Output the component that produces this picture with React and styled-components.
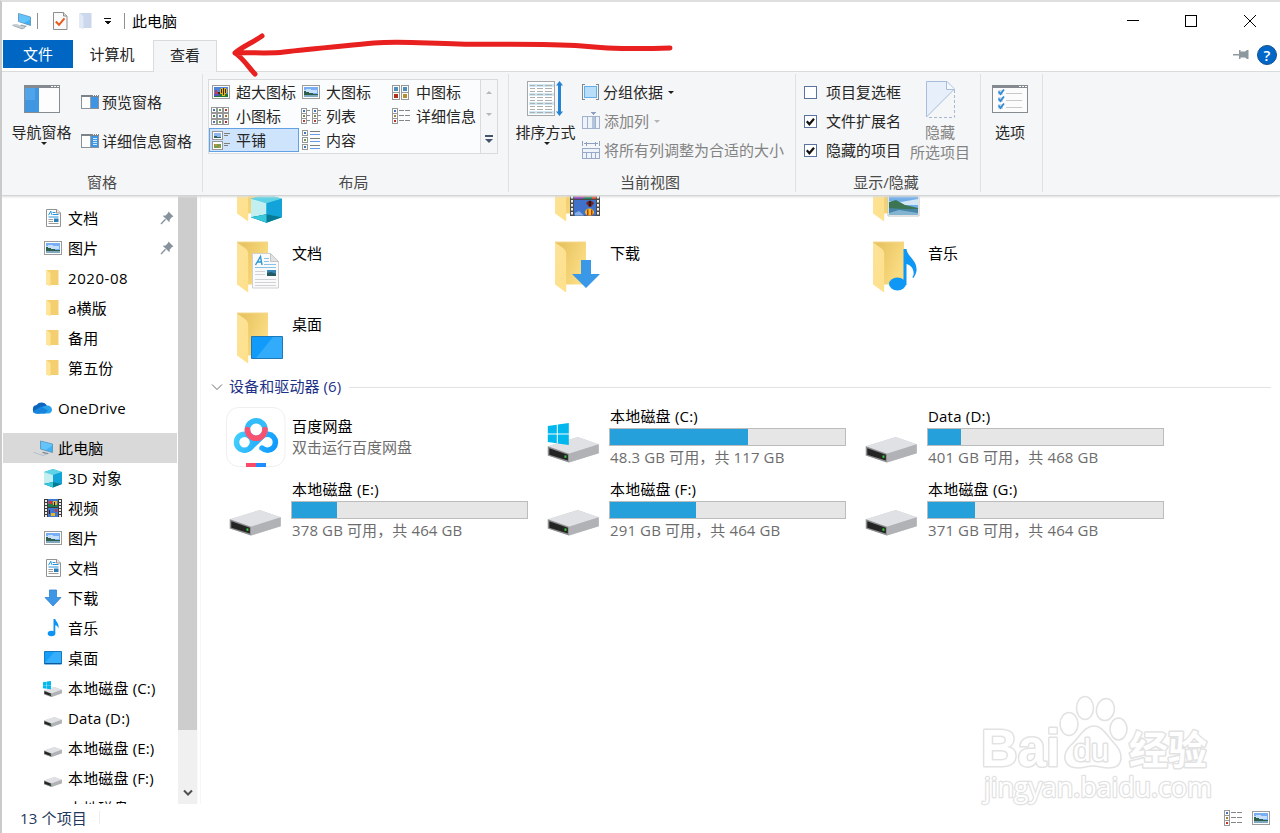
import React from 'react';
import styled, { createGlobalStyle } from 'styled-components';

const GlobalStyle = createGlobalStyle`
  * {
    box-sizing: border-box;
  }
  body {
    margin: 0;
    background: #fff;
    font-family: "Open Sans", "Noto Sans CJK SC", sans-serif;
    font-size: 15px;
    line-height: 20px;
    color: #000;
  }
  svg {
    display: block;
    flex: none;
  }
`;

/* ---------- window frame ---------- */

const Window = styled.div`
  position: relative;
  width: 1280px;
  height: 833px;
  display: flex;
  flex-direction: column;
  overflow: hidden;
  background: #fff;
  border-top: 2px solid #dfdfdf;
  border-left: 2px solid #cacaca;
  white-space: nowrap;
`;

const TitleBar = styled.div`
  display: flex;
  align-items: center;
  height: 38px;
  padding-left: 10px;
`;

const TitleDivider = styled.div`
  width: 1px;
  height: 16px;
  margin-left: ${(props) => props.$left}px;
  margin-right: ${(props) => props.$right}px;
  background: #8f8f8f;
`;

const Gap = styled.div`
  width: ${(props) => props.$w}px;
`;

const WindowTitle = styled.div`
  flex: 1;
`;

const WindowButtons = styled.div`
  display: flex;
  gap: 44px;
  padding-right: 23px;
`;

const TabBar = styled.div`
  display: flex;
  height: 32px;
  padding-left: 1px;
  border-bottom: 1px solid #dadbdc;
`;

const Tab = styled.div`
  display: flex;
  align-items: center;
  justify-content: center;
  width: ${(props) => props.$width}px;
  height: ${(props) => (props.$active ? 32 : 28)}px;
  padding-bottom: ${(props) => (props.$active ? 3 : 0)}px;
  padding-right: ${(props) => (props.$file || props.$active ? 0 : 2)}px;
  color: ${(props) => (props.$file ? '#fff' : '#262626')};
  background: ${(props) => (props.$file ? '#0066c4' : props.$active ? '#f5f6f7' : 'transparent')};
  border: ${(props) => (props.$active ? '1px solid #dadbdc' : 'none')};
  border-bottom: none;
`;

const TabTools = styled.div`
  display: flex;
  align-items: center;
  gap: 8px;
  margin-left: auto;
  padding-right: 3px;
  padding-bottom: 2px;
`;

const HelpBadge = styled.div`
  width: 20px;
  height: 20px;
  border-radius: 50%;
  background: #0067c8;
  border: 1px solid #17528c;
  color: #fff;
  font-size: 15px;
  font-weight: 600;
  line-height: 18px;
  text-align: center;
`;

/* ---------- ribbon ---------- */

const Ribbon = styled.div`
  position: relative;
  z-index: 1;
  display: flex;
  height: 124px;
  padding-top: 2px;
  background: #f5f6f7;
  border-bottom: 1px solid #d2d4d6;
  box-shadow: 0 1px 2px #dcdcdc;
  color: #262626;
`;

const Group = styled.div`
  display: flex;
  flex-direction: column;
  width: ${(props) => props.$width}px;
  height: 118px;
  border-right: 1px solid #dfe1e3;
`;

const GroupBody = styled.div`
  display: flex;
  height: 99px;
`;

const GroupLabel = styled.div`
  padding-right: ${(props) => props.$shift || 0}px;
  text-align: center;
  line-height: 20px;
  color: #4a4a4a;
`;

const BigButton = styled.div`
  display: flex;
  flex-direction: column;
  align-items: center;
  width: ${(props) => props.$width}px;
  padding-top: ${(props) => props.$top}px;
  color: ${(props) => (props.$disabled ? '#838383' : 'inherit')};
`;

const BigIcon = styled.div`
  height: ${(props) => props.$height}px;
`;

const ButtonColumn = styled.div`
  display: flex;
  flex-direction: column;
  gap: ${(props) => props.$gap}px;
  padding: ${(props) => props.$pad};
`;

const SmallButton = styled.div`
  display: flex;
  align-items: center;
  gap: ${(props) => props.$gap || 4}px;
  height: 20px;
  color: ${(props) => (props.$disabled ? '#838383' : 'inherit')};
`;

const Gallery = styled.div`
  display: flex;
  width: 290px;
  height: 75px;
  margin: 5px 0 0 5px;
  background: #fbfcfd;
  border: 1px solid #dadbdc;
`;

const GalleryGrid = styled.div`
  display: grid;
  grid-template-columns: 90px 90px 91px;
  grid-auto-rows: 24px;
  width: 271px;
`;

const GalleryItem = styled.div`
  display: flex;
  align-items: center;
  gap: 6px;
  padding-left: ${(props) => (props.$selected ? 1 : 2)}px;
  background: ${(props) => (props.$selected ? '#cde4fc' : 'transparent')};
  border: ${(props) => (props.$selected ? '1px solid #62a2e4' : 'none')};
`;

const GalleryIcon = styled.div`
  display: flex;
  justify-content: center;
  width: 19px;
`;

const GalleryScroll = styled.div`
  display: flex;
  flex-direction: column;
  justify-content: space-around;
  align-items: center;
  width: 17px;
  padding-top: 1px;
  background: #f5f6f7;
  border-left: 1px solid #dadbdc;
`;

const Triangle = styled.div`
  width: 0;
  height: 0;
  margin-left: ${(props) => props.$left || 0}px;
  border-left: ${(props) => props.$size || 4}px solid transparent;
  border-right: ${(props) => props.$size || 4}px solid transparent;
  border-${(props) => (props.$up ? 'bottom' : 'top')}: ${(props) => props.$size || 4}px solid
    ${(props) => props.$color || '#1e1e1e'};
`;

const MoreMark = styled.div`
  padding-top: 2px;
  border-top: 2px solid #44546a;
`;

const CheckBox = styled.div`
  display: flex;
  align-items: center;
  justify-content: center;
  width: 13px;
  height: 13px;
  background: #fff;
  border: 1px solid #5a72a0;
`;

/* ---------- content ---------- */

const Body = styled.div`
  display: flex;
  height: 608px;
`;

const Sidebar = styled.div`
  width: 175px;
  height: 608px;
  padding-top: 7px;
  overflow: hidden;
`;

const NavRow = styled.div`
  display: flex;
  align-items: center;
  height: 30px;
  margin-top: ${(props) => (props.$root ? 10 : 0)}px;
  margin-left: 1px;
  padding-left: ${(props) => (props.$root ? 30 : 40)}px;
  background: ${(props) => (props.$selected ? '#d9d9d9' : 'transparent')};
`;

const NavIcon = styled.div`
  display: flex;
  justify-content: center;
  width: 20px;
  margin-right: 5px;
`;

const NavLabel = styled.div`
  flex: 1;
  letter-spacing: ${(props) => props.$track || 0.15}px;
`;

const PinSlot = styled.div`
  padding-right: 3px;
`;

const ScrollBar = styled.div`
  display: flex;
  flex-direction: column;
  width: 20px;
  margin-left: 1px;
  background: #f0f0f0;
  border-right: 1px solid #fafafa;
`;

const ScrollThumb = styled.div`
  height: 534px;
  background: #cdcdcd;
`;

const ScrollArrow = styled.div`
  display: flex;
  justify-content: center;
  margin-top: 59px;
`;

const Main = styled.div`
  flex: 1;
  height: 608px;
  margin-left: 2px;
  padding-left: 10px;
  overflow: hidden;
  border-left: 1px solid #f6f6f6;
`;

const FolderGrid = styled.div`
  display: grid;
  grid-template-columns: repeat(3, 318px);
  grid-auto-rows: 71px;
  margin-top: -36px;
  padding-left: 18px;
`;

const FolderTile = styled.div`
  display: flex;
  gap: 6px;
  padding-top: 10px;
  padding-left: 8px;
`;

const FolderName = styled.div`
  padding-top: 2px;
`;

const SectionHeader = styled.div`
  display: flex;
  align-items: center;
  height: 24px;
  margin-top: 2px;
  color: #1e3287;
`;

const SectionTitle = styled.div`
  margin: -2px 8px 0 6px;
  letter-spacing: 0.1px;
`;

const SectionLine = styled.div`
  flex: 1;
  height: 1px;
  margin-right: 9px;
  background: #e2e2e2;
`;

const DeviceGrid = styled.div`
  display: grid;
  grid-template-columns: repeat(3, 318px);
  grid-auto-rows: 73px;
  padding: 8px 0 0 15px;
`;

const DeviceTile = styled.div`
  display: flex;
`;

const DeviceIcon = styled.div`
  width: 66px;
`;

const DeviceInfo = styled.div`
  width: 236px;
  padding-top: ${(props) => props.$top || 0}px;
`;

const DeviceName = styled.div`
  height: ${(props) => props.$height || 21}px;
  line-height: 18px;
  letter-spacing: 0.2px;
`;

const DeviceDetail = styled.div`
  padding-top: 1px;
  color: #6d6d6d;
  letter-spacing: ${(props) => props.$track || 0}px;
`;

const UsageBar = styled.div`
  height: 18px;
  margin-left: -1px;
  background: #e6e6e6;
  border: 1px solid #bcbcbc;
`;

const UsageFill = styled.div`
  height: 16px;
  background: #26a0da;
`;

const StatusBar = styled.div`
  display: flex;
  align-items: center;
  height: 29px;
  padding-left: 18px;
  padding-bottom: 2px;
  color: #1e395b;
`;

const StatusText = styled.div`
  letter-spacing: 0.15px;
`;

const StatusViews = styled.div`
  display: flex;
  align-items: center;
  gap: 10px;
  margin-left: auto;
  padding-right: 10px;
`;

const StatusDivider = styled.div`
  width: 1px;
  height: 13px;
  margin-left: 12px;
  background: #ececec;
`;

const Overlay = styled.svg`
  position: absolute;
  z-index: 2;
  left: ${(props) => props.$x}px;
  top: ${(props) => props.$y}px;
`;

/* ---------- small icons ---------- */

const PictureIcon = ({ flower }) => (
  <svg width="18" height="14" viewBox="0 0 18 14" shapeRendering="crispEdges">
    <rect x="0.5" y="0.5" width="17" height="13" fill="#fff" stroke="#9b9b9b" />
    <rect x="2" y="2" width="14" height="10" fill={flower ? '#4b86dc' : '#78aef4'} />
    {flower ? (
      <g>
        <path d="M2 9h14v3H2z" fill="#1f7a3a" />
        <path d="M3 5h2v2h2v2H3z" fill="#c93a55" />
        <path d="M2 9h5v2H2z" fill="#5a4fc8" />
        <path d="M9 3h5v1h1v4h-1v1h-1v2h-3V9H8V4h1z" fill="#e8b818" />
        <path d="M11 3h1v7h-1zM9 4h1v4H9zM13 4h1v4h-1zM6 7h2v2H6z" fill="#3a2a15" />
      </g>
    ) : (
      <g>
        <path d="M4 4h5v1h6v3H2V5h2z" fill="#c6e0fb" />
        <path d="M2 6h2v1h3v1h4v1h5v3H2z" fill="#7fa9c0" />
        <path d="M2 6h2v1h3v1h4v1h5v1H2z" fill="#2f5f4a" />
      </g>
    )}
  </svg>
);

const MiniBox = ({ x, y, color, size = 5 }) => (
  <g>
    <rect x={x + 0.5} y={y + 0.5} width={size} height={size} fill="#fff" stroke="#989898" />
    <rect x={x + 2} y={y + 2} width={size - 3} height={size - 3} fill={color} />
  </g>
);

const MediumIcon = () => (
  <svg width="17" height="15" viewBox="0 0 17 15" shapeRendering="crispEdges">
    <MiniBox x={0} y={0} size={7} color="#4c8fbe" />
    <MiniBox x={9} y={0} size={7} color="#4c8fbe" />
    <MiniBox x={0} y={7} size={7} color="#b0301c" />
    <MiniBox x={9} y={7} size={7} color="#b88c2c" />
  </svg>
);

const SmallGridIcon = () => (
  <svg width="19" height="19" viewBox="0 0 19 19" shapeRendering="crispEdges">
    {[0, 1, 2].map((row) =>
      [0, 1, 2].map((col) => (
        <MiniBox
          key={row * 3 + col}
          x={col * 6}
          y={row * 6}
          color={['#3f79b8', '#5e9c55', '#b9402c', '#4b8a58', '#4c84c8', '#a8761e', '#3f79b8', '#67994c', '#b52b22'][row * 3 + col]}
        />
      ))
    )}
  </svg>
);

const ListIcon = () => (
  <svg width="20" height="17" viewBox="0 0 20 17" shapeRendering="crispEdges">
    {[0, 11].map((x) => (
      <g key={x}>
        <MiniBox x={x} y={0} color="#3f79b8" />
        <MiniBox x={x} y={5} color="#76884c" />
        <MiniBox x={x} y={10} color="#b9402c" />
        <path d={`M${x + 6} 2.5h3M${x + 6} 7.5h3M${x + 6} 12.5h3`} stroke="#8a8a8a" />
      </g>
    ))}
  </svg>
);

const DetailsIcon = () => (
  <svg width="18" height="16" viewBox="0 0 18 16" shapeRendering="crispEdges">
    <MiniBox x={0} y={0} color="#3f79b8" />
    <MiniBox x={0} y={5} color="#9a8440" />
    <MiniBox x={0} y={10} color="#c8301c" />
    <path d="M7 2.5h5M13 2.5h5M7 7.5h5M13 7.5h5M7 12.5h5M13 12.5h5" stroke="#868686" />
  </svg>
);

const TilesIcon = () => (
  <svg width="18" height="19" viewBox="0 0 18 19" shapeRendering="crispEdges">
    <rect x="0.5" y="0.5" width="10" height="8" fill="#fff" stroke="#989898" />
    <path d="M2 2h7v5H2z" fill="#8bb7ee" />
    <path d="M2 5h3v1h4v1H2z" fill="#345f62" />
    <rect x="0.5" y="10.5" width="10" height="8" fill="#fff" stroke="#989898" />
    <path d="M2 13h7v4H2z" fill="#6fa052" />
    <path d="M3 13h2v2H3zM7 15h1v2H7z" fill="#d88a3a" />
    <path d="M12 2.5h6M12 4.5h4M12 12.5h6M12 14.5h4" stroke="#7e7e7e" />
  </svg>
);

const ContentIcon = () => (
  <svg width="18" height="20" viewBox="0 0 18 20" shapeRendering="crispEdges">
    <MiniBox x={0} y={0} color="#3f79b8" />
    <MiniBox x={0} y={7} color="#76984c" />
    <MiniBox x={0} y={14} color="#3f79b8" />
    <path d="M8 1.5h10M8 8.5h10M8 15.5h10" stroke="#7e7e7e" />
    <path d="M8 4.5h10M8 11.5h10M8 18.5h10" stroke="#6c9ce8" />
  </svg>
);

const PaneIcon = ({ lines }) => (
  <svg width="18" height="14" viewBox="0 0 18 14" shapeRendering="crispEdges">
    <rect x="0.5" y="0.5" width="17" height="13" fill="#fdfdfd" stroke="#8b9199" />
    <path d="M0 0h18v2H0z" fill="#7c8289" />
    <path d="M9 2h1v11H9z" fill="#9aa0a8" />
    <path d="M10 2h7v11h-7z" fill="#3d95e4" />
    <path d="M12 0h1v1h-1zM14 0h1v1h-1zM16 0h1v1h-1z" fill="#fff" />
    {lines && <path d="M12 4.5h4M12 6.5h4M12 8.5h4M12 10.5h4" stroke="#d5eafc" />}
  </svg>
);

const NavPaneIcon = () => (
  <svg width="36" height="28" viewBox="0 0 36 28" shapeRendering="crispEdges">
    <rect x="0.5" y="0.5" width="35" height="27" fill="#fdfdfd" stroke="#868b90" />
    <path d="M0 0h36v3H0z" fill="#848a8f" />
    <path d="M1 3h14v24H1z" fill="#3f97e2" />
    <path d="M1 3h10v12H1z" fill="#4fa4ea" />
    <path d="M27 1h2v1h-2zM30 1h2v1h-2zM33 1h2v1h-2z" fill="#fff" />
  </svg>
);

const SortIcon = () => (
  <svg width="37" height="36" viewBox="0 0 37 36">
    <rect x="0.5" y="0.5" width="27" height="34" fill="#fff" stroke="#a7a7a7" shapeRendering="crispEdges" />
    <path d="M2 3h25v3H2zM2 12h25v3H2zM2 21h25v3H2zM2 30h25v3H2z" fill="#cfe8f3" />
    {[4, 7, 10, 13, 16, 19, 22, 25, 28, 31].map((y) => (
      <path key={y} d={`M3 ${y + 0.5}h5M10 ${y + 0.5}h6M18 ${y + 0.5}h7`} stroke="#aeaeae" shapeRendering="crispEdges" />
    ))}
    <path d="M32.5 2v31" stroke="#2583d3" strokeWidth="3" />
    <path d="M29 4.5L32.5 0 36 4.5zM29 30.5l3.5 4.5 3.5-4.5z" fill="#2583d3" />
  </svg>
);

const GroupByIcon = () => (
  <svg width="17" height="16" viewBox="0 0 17 16" shapeRendering="crispEdges">
    <path d="M3 0.5H0.5v15H3M14 0.5h2.5v15H14" fill="none" stroke="#7b8896" />
    <rect x="2.5" y="2.5" width="12" height="11" fill="#b9def9" stroke="#66aee6" />
  </svg>
);

const AddColumnIcon = () => (
  <svg width="18" height="18" viewBox="0 0 18 18" shapeRendering="crispEdges">
    <path d="M0.5 4.5h17v12H0.5zM5.5 4v12M13.5 4v12" fill="#eef3fa" stroke="#a3b2cc" />
    <path d="M10 5h3v11h-3z" fill="#b4c4dc" />
    <path d="M9 0h5v1h-1v1h-1v1h-1V2h-1V1H9z" fill="#8e9fc0" />
  </svg>
);

const FitColumnsIcon = () => (
  <svg width="18" height="18" viewBox="0 0 18 18" shapeRendering="crispEdges">
    <path d="M0.5 0v5M17.5 0v5M2 2.5h14M4.5 0.5v4M13.5 0.5v4" stroke="#8e9fc0" />
    <path d="M0.5 7.5h17v10H0.5zM0 11.5h18M4.5 12v5M9.5 12v5M13.5 12v5" fill="#eef3fa" stroke="#97a9c7" />
  </svg>
);

const HideIcon = () => (
  <svg width="29" height="37" viewBox="0 0 29 37">
    <path d="M0.5 36V0.5H21L28.5 8z" fill="#e7effa" stroke="#a9bddb" />
    <path d="M20.5 1v7.5h8" fill="#f5f9fe" stroke="#a9bddb" />
    <path d="M28.5 9v27.5H1" fill="none" stroke="#a9b8d0" strokeDasharray="3 2" />
  </svg>
);

const OptionsIcon = () => (
  <svg width="36" height="28" viewBox="0 0 36 28">
    <g shapeRendering="crispEdges">
      <rect x="0.5" y="0.5" width="35" height="27" fill="#fcfcfc" stroke="#868b90" />
      <path d="M0 0h36v3H0z" fill="#848a8f" />
      <path d="M27 1h2v1h-2zM30 1h2v1h-2zM33 1h2v1h-2z" fill="#fff" />
      <path d="M14 8.5h16M14 15.5h16M14 22.5h16" stroke="#c9c9c9" />
      <path d="M6 5h5v5H6zM6 12h5v5H6zM6 19h5v5H6z" fill="#d6dce2" />
    </g>
    <path d="M6.5 6.5l2 2.5 3.5-4.5M6.5 13.5l2 2.5 3.5-4.5M6.5 20.5l2 2.5 3.5-4.5" fill="none" stroke="#2d8ddb" strokeWidth="1.8" />
  </svg>
);

const CheckMark = () => (
  <svg width="11" height="11" viewBox="0 0 11 11">
    <path d="M1.8 5.2l2.6 3L9 2.8" fill="none" stroke="#111" strokeWidth="2.2" />
  </svg>
);

const ComputerIcon = () => (
  <svg width="20" height="17" viewBox="0 0 20 17">
    <path d="M6.5 0.5L18.5 4v8.5L6.5 8.5z" fill="#3fb1f5" stroke="#5b8fb3" strokeWidth="0.8" />
    <path d="M7 1l11 3.3v2.2L12 10 7 8.2z" fill="#62c4fb" />
    <path d="M9 11.5l6 1.5-1.5 1.2L8 12.8z" fill="#98a5af" />
    <path d="M0.5 11.8L4 10.8l9 3.2-3 1.5z" fill="#c6cdd4" />
    <path d="M0.5 12.3l9.5 3.5 3-1.3" fill="none" stroke="#9aa6b0" />
  </svg>
);

const ComputerNavIcon = () => (
  <svg width="20" height="17" viewBox="0 0 20 17">
    <path d="M7.5 1L19.5 4v8.500L7.500 9z" fill="#3fb1f5" stroke="#5b8fb3" strokeWidth="0.8" />
    <path d="M8 1.500l11 2.800v1.500L13 10 8 8.700z" fill="#62c4fb" />
    <path d="M10 11.800l6 1.500-1.500 1L9 13z" fill="#7f8d98" />
    <path d="M0.500 12.300l9.500 3.200 4-1.500" fill="none" stroke="#b4bfcb" />
  </svg>
);

const PageCheckIcon = () => (
  <svg width="15" height="18" viewBox="0 0 15 18">
    <path d="M0.5 0.5h10l3.5 3.5v13.5H0.5z" fill="#fafafa" stroke="#8e8e8e" />
    <path d="M10.5 0.5v3.500H14" fill="#ddd" stroke="#8e8e8e" />
    <path d="M2.8 9.5l3.2 3.3 5.5-6.5" fill="none" stroke="#ea5a1c" strokeWidth="2" />
  </svg>
);

const FolderSmall = ({ ghost }) => (
  <svg width="14" height="18" viewBox="0 0 14 18">
    <path d="M0.5 1h12v15h-12z" fill={ghost ? '#cbd8eb' : '#f3cf70'} />
    <path d="M0.5 1l4 3v13.500l-4-2z" fill={ghost ? '#e0e9f5' : '#ffe596'} />
  </svg>
);

const DocSmall = () => (
  <svg width="15" height="18" viewBox="0 0 15 18">
    <path d="M0.5 0.5h10.500l3.500 3.500v13.500H0.500z" fill="#fff" stroke="#939393" />
    <path d="M10.500 0.500V4h4" fill="#eee" stroke="#939393" />
    <path d="M2.500 6.200l2.300-4 .8 3.500M6.500 3.500h3M6.500 5.500h6M2.500 8h10" fill="none" stroke="#2495dc" />
    <path d="M2.500 10.500h4.500M2.500 12.500h4.500M2.500 14.500h10" stroke="#9b9b9b" />
    <path d="M8 9.500h4.500v3.500H8z" fill="#2a7fb8" />
  </svg>
);

const CubeShape = () => (
  <g>
    <path d="M9 0l9 3v12l-9 3.500L0 15V3z" fill="#27bcd6" />
    <path d="M9 0l9 3-9 3-9-3z" fill="#5fd2e6" />
    <path d="M0 3l9 3v7L0 15z" fill="#c4eff0" />
    <path d="M18 3L9 6v7l9 2z" fill="#12a3da" />
    <path d="M0 15l9-2 9 2-9 3.500z" fill="#067a94" />
    <path d="M0 15l9-2v5.500z" fill="#38c8dc" />
  </g>
);

const CubeIcon = () => (
  <svg width="18" height="19" viewBox="0 0 18 19">
    <CubeShape />
  </svg>
);

const FilmShape = () => (
  <g shapeRendering="crispEdges">
    <path d="M0 0h18v18H0z" fill="#3b3b3b" />
    <path d="M4 0h10v8H4z" fill="#3f78d0" />
    <path d="M4 9h10v9H4z" fill="#3f78d0" />
    <path d="M4 5h10v3H4z" fill="#1b7f4e" />
    <path d="M5 2h3v3H5zM11 10h2v3h-2z" fill="#d7352c" />
    <path d="M9 2h4v4H9zM7 14h4v3H7z" fill="#edb51c" />
    <path d="M10 3h1v4h-1zM5 11h1v4H5z" fill="#42122a" />
    {[0, 3, 6, 9, 12, 15].map((y) => (
      <path key={y} d={`M1 ${y + 1}h2v2H1zM15 ${y + 1}h2v2h-2z`} fill="#eee" />
    ))}
  </g>
);

const FilmIcon = () => (
  <svg width="18" height="18" viewBox="0 0 18 18">
    <FilmShape />
  </svg>
);

/* bottom frames of the large film strip */
const FilmLarge = () => (
  <g>
    <path d="M15 16h30v30H15z" fill="#4a4a4a" />
    <path d="M19 16h22v13H19z" fill="#15805a" />
    <path d="M19 30h22v15.500H19z" fill="#3f72c8" />
    <path d="M21 23l5-3 4 8H21z" fill="#cf3158" />
    <path d="M19 27h9v2h-9z" fill="#7b3ab8" />
    <path d="M31 23h4v4h-4zM37 26h4v3h-4z" fill="#d9452c" />
    <path d="M31 33q4-5 8 0l-3 4h-2z" fill="#7d1d20" />
    <path d="M34 31h2v5h-2z" fill="#1c1c1c" />
    <path d="M30 43q0-4.500 4.500-4.500T39 43l-2 2.500h-5z" fill="#ecc318" />
    <path d="M32 39.500h1.500v6H32zM36 39.500h1.500v6H36z" fill="#c9332a" />
    <path d="M20 43l4-2 5 4.500h-9z" fill="#86aee8" />
    {[18, 22, 26, 30, 34, 38, 42].map((y) => (
      <path key={y} d={`M16 ${y}h2v2.500h-2zM42 ${y}h2v2.500h-2z`} fill="#efefef" />
    ))}
  </g>
);

const DownIcon = () => (
  <svg width="18" height="18" viewBox="0 0 18 18">
    <path d="M5.500 1h7v7.500H17L9 17 1 8.500h4.500z" fill="#3d97e6" stroke="#2f82cd" strokeWidth="0.8" />
  </svg>
);

const NoteIcon = () => (
  <svg width="13" height="18" viewBox="0 0 13 18">
    <ellipse cx="4.500" cy="14.500" rx="3.800" ry="2.800" fill="#0d94f2" />
    <path d="M6.500 0h1.800c.5 3 4 4 3.200 9.500-.6-2-1.700-3-3.200-3.300v8.300H6.500z" fill="#0d94f2" />
  </svg>
);

const DesktopIcon = () => (
  <svg width="18" height="14" viewBox="0 0 18 14">
    <path d="M0.500 0.500h17v12.500H0.500z" fill="#159ffa" stroke="#1679c0" />
    <path d="M1 12L10 1h7v11z" fill="#35aefb" />
    <path d="M1 12.500h16" stroke="#0b5b99" />
  </svg>
);

const CloudIcon = () => (
  <svg width="22" height="14" viewBox="0 0 22 14">
    <path d="M4.500 12.500a4.300 4.300 0 0 1 0-8.500A6.500 6.500 0 0 1 15 4.500l-7 8z" fill="#0d64bd" />
    <path d="M15 4.600c2.500-.3 5 1.500 5 4.200 0 2-1.500 3.700-3.800 3.700H4.500L9 6z" fill="#28a2ea" />
    <path d="M0.800 10.500L9 5.600l7 4-3 2.900H4.500c-1.600 0-3-.6-3.700-2z" fill="#1684dc" />
  </svg>
);

const DriveShape = () => (
  <g>
    <path d="M0 9.500L30.500 0 52 7.500v9L22 26 0 19z" fill="#cfd0d3" />
    <path d="M0 9.500L30.500 0 52 7.500 21.500 17z" fill="#e0e1e5" />
    <path d="M21.500 17L52 7.500v9L21.500 26z" fill="#b1b2b5" />
    <path d="M0 9.500L21.500 17v9L0 19z" fill="#8c8d8f" />
    <path d="M1.500 11.500l19 6.500v6L1.500 18z" fill="#242424" />
    <path d="M17 18.800h2v2.400h-2z" fill="#35d13b" />
  </g>
);

const WindowsMark = ({ x, y, scale }) => (
  <g transform={`translate(${x} ${y}) scale(${scale})`}>
    <path d="M0 3l9-1.300v8.800H0zM10 1.500L21 0v10.500H10zM0 11.500h9v8.800L0 19zM10 11.500h11V22l-11-1.500z" fill="#00b7ee" />
  </g>
);

const DriveSmall = ({ system }) => (
  <svg width="20" height="18" viewBox="0 0 20 18">
    <g transform="translate(1 8) scale(0.345 0.38)">
      <DriveShape />
    </g>
    {system && <WindowsMark x={0} y={2} scale={0.38} />}
  </svg>
);

const PinIcon = () => (
  <svg width="14" height="14" viewBox="0 0 14 14">
    <path d="M8.500 0.500l5 5-1.500.6L9.800 8.500l-.4 2.700L2.700 4.800l2.900-.4L8 2z" fill="#87929c" />
    <path d="M5.500 8.200L1 13" stroke="#87929c" strokeWidth="1.3" />
  </svg>
);

const RibbonPin = () => (
  <svg width="16" height="9" viewBox="0 0 16 9">
    <path d="M0 4h7v1.500H0z" fill="#8e989f" />
    <path d="M6 0h1.500v1.500h4.500L14 0h1.500v9H14l-2-1.500H7.500V9H6z" fill="#8e989f" />
  </svg>
);

/* ---------- large icons ---------- */

const overlays = {
  cube: (
    <g transform="translate(14 24) scale(1.72 1.55)">
      <CubeShape />
    </g>
  ),
  film: <FilmLarge />,
  picture: (
    <g>
      <path d="M15 25h31v21H15z" fill="#fff" stroke="#c4c4c4" />
      <path d="M16 26h29v19H16z" fill="#72afea" />
      <path d="M16 31l12 1 17-3v6H16z" fill="#d4e7f7" />
      <path d="M16 32l7-2 9 5 13 3v2H16z" fill="#3b7553" />
      <path d="M16 38l14 1h15v6H16z" fill="#4884a5" />
      <path d="M16 43l10-3 19 3v2H16z" fill="#82b4d2" />
    </g>
  ),
  doc: (
    <g>
      <path d="M15.500 12.500h18l8 8v26.500h-26z" fill="#fafafa" stroke="#d0d0d0" />
      <path d="M33.500 12.500v8h8z" fill="#e3e3e3" stroke="#c4c4c4" />
      <path d="M18.500 24l5-8.500 1.500 8.500M20 21h5" fill="none" stroke="#2b96d2" strokeWidth="1.4" />
      <path d="M27 17.500h5M27 20.500h5M27 23.500h12M18 26.500h21" stroke="#87c3e5" />
      <path d="M18 30.500h10M18 33.500h10M18 38.500h21M18 41.500h21M18 44.500h21" stroke="#cfd3d6" />
      <path d="M30 29h9v6h-9z" fill="#3585b6" />
      <path d="M30 32l4-1 5 2v2h-9z" fill="#245a60" />
    </g>
  ),
  down: <path d="M26 19h10v14h9L31 47 17 33h9z" fill="#3a98e8" />,
  note: (
    <g transform="translate(-0.5 0)">
      <ellipse cx="25" cy="43" rx="8.500" ry="6.500" fill="#0f97f5" />
      <path d="M31 8h3c1 8 11 11 10 22-.5 3-2 5-3 7-1.500-.5-1-1 0-3 1-6-3-10-7-11v21h-3z" fill="#0f97f5" />
    </g>
  ),
  desktop: (
    <g>
      <path d="M14.500 24.500h31v22h-31z" fill="#109afa" stroke="#1d79b8" />
      <path d="M19 46l17-21h9v21z" fill="#33abfb" />
    </g>
  ),
};

const FolderIcon = ({ kind }) => (
  <svg width="49" height="54" viewBox="0 0 49 54">
    <defs>
      <linearGradient id="folderBack" x1="0" y1="0" x2="1" y2="0.5">
        <stop offset="0.2" stopColor="#e8c462" />
        <stop offset="1" stopColor="#fbdd83" />
      </linearGradient>
      <linearGradient id="folderFront" x1="0" y1="0" x2="1" y2="1">
        <stop offset="0" stopColor="#fce39a" />
        <stop offset="1" stopColor="#ffe08a" />
      </linearGradient>
    </defs>
    <path d="M0 1h31v42.500H9z" fill="url(#folderBack)" />
    <path d="M0 1.500L8 7q3 2 3.200 5v39.500L0 43.500z" fill="url(#folderFront)" />
    <path d="M0 1h31" stroke="#f3d88e" />
    {overlays[kind]}
  </svg>
);

const DriveIcon = ({ system }) => (
  <svg width="60" height="60" viewBox="0 0 60 60">
    <g transform="translate(3.8 30) scale(0.98)">
      <DriveShape />
    </g>
    {system && <WindowsMark x={3.8} y={16} scale={1} />}
  </svg>
);

const NetdiskIcon = () => (
  <svg width="60" height="60" viewBox="0 0 60 60">
    <defs>
      <linearGradient id="netBlue" gradientUnits="userSpaceOnUse" x1="8" y1="20" x2="52" y2="40">
        <stop offset="0" stopColor="#4bd5fb" />
        <stop offset="1" stopColor="#0b98ff" />
      </linearGradient>
    </defs>
    <rect x="0.5" y="0.5" width="58.5" height="59" rx="12" fill="#fff" stroke="#efefef" />
    <g fill="none" strokeWidth="5.5" strokeLinecap="round">
      <circle cx="18.5" cy="35.2" r="8" stroke="url(#netBlue)" />
      <path d="M36 41.100A8 8 0 1 0 36.500 28.900L24.500 40.500" stroke="url(#netBlue)" />
      <circle cx="30.200" cy="22.500" r="8.800" stroke="#32bdfa" />
      <path d="M21.400 22.500a8.800 8.800 0 0 0 17.600 0" stroke="#f95271" />
    </g>
    <path d="M20 56h10v4H20z" fill="#fb4a68" />
    <path d="M30 56h10v4H30z" fill="#1f8dff" />
  </svg>
);

const navItems = [
  { label: '文档', icon: <DocSmall />, pinned: true },
  { label: '图片', icon: <PictureIcon />, pinned: true },
  { label: '2020-08', icon: <FolderSmall />, track: 0.55 },
  { label: 'a横版', icon: <FolderSmall /> },
  { label: '备用', icon: <FolderSmall /> },
  { label: '第五份', icon: <FolderSmall /> },
  { label: 'OneDrive', icon: <CloudIcon />, root: true, track: 0.25 },
  { label: '此电脑', icon: <ComputerNavIcon />, root: true, selected: true },
  { label: '3D 对象', icon: <CubeIcon /> },
  { label: '视频', icon: <FilmIcon /> },
  { label: '图片', icon: <PictureIcon /> },
  { label: '文档', icon: <DocSmall /> },
  { label: '下载', icon: <DownIcon /> },
  { label: '音乐', icon: <NoteIcon /> },
  { label: '桌面', icon: <DesktopIcon /> },
  { label: '本地磁盘 (C:)', icon: <DriveSmall system /> },
  { label: 'Data (D:)', icon: <DriveSmall /> },
  { label: '本地磁盘 (E:)', icon: <DriveSmall /> },
  { label: '本地磁盘 (F:)', icon: <DriveSmall /> },
  { label: '本地磁盘 (G:)', icon: <DriveSmall /> },
];

const galleryItems = [
  { label: '超大图标', icon: <PictureIcon flower /> },
  { label: '大图标', icon: <PictureIcon /> },
  { label: '中图标', icon: <MediumIcon /> },
  { label: '小图标', icon: <SmallGridIcon /> },
  { label: '列表', icon: <ListIcon /> },
  { label: '详细信息', icon: <DetailsIcon /> },
  { label: '平铺', icon: <TilesIcon />, selected: true },
  { label: '内容', icon: <ContentIcon /> },
];

const folders = [
  { kind: 'cube', name: '' },
  { kind: 'film', name: '' },
  { kind: 'picture', name: '' },
  { kind: 'doc', name: '文档' },
  { kind: 'down', name: '下载' },
  { kind: 'note', name: '音乐' },
  { kind: 'desktop', name: '桌面' },
];

const drives = [
  { name: '本地磁盘 (C:)', usage: 58.8, info: '48.3 GB 可用，共 117 GB', system: true },
  { name: 'Data (D:)', usage: 14.1, info: '401 GB 可用，共 468 GB' },
  { name: '本地磁盘 (E:)', usage: 19.2, info: '378 GB 可用，共 464 GB' },
  { name: '本地磁盘 (F:)', usage: 36.6, info: '291 GB 可用，共 464 GB' },
  { name: '本地磁盘 (G:)', usage: 20, info: '371 GB 可用，共 464 GB' },
];

const checks = [
  { label: '项目复选框', on: false },
  { label: '文件扩展名', on: true },
  { label: '隐藏的项目', on: true },
];

const App = () => {
  return (
    <Window>
      <GlobalStyle />
      <TitleBar>
        <ComputerIcon />
        <TitleDivider $left={5} $right={15} />
        <PageCheckIcon />
        <Gap $w={11} />
        <FolderSmall ghost />
        <Gap $w={11} />
        <svg width="8" height="8" viewBox="0 0 8 8" shapeRendering="crispEdges">
          <path d="M0 1.5h7" stroke="#111" />
          <path d="M0 4h7L3.5 7.5z" fill="#111" />
        </svg>
        <TitleDivider $left={12} $right={7} />
        <WindowTitle>此电脑</WindowTitle>
        <WindowButtons>
          <svg width="14" height="14" viewBox="0 0 14 14" shapeRendering="crispEdges">
            <path d="M0 6.5h12" stroke="#000" />
          </svg>
          <svg width="14" height="14" viewBox="0 0 14 14" shapeRendering="crispEdges">
            <rect x="0.5" y="1.5" width="11" height="11" fill="none" stroke="#000" />
          </svg>
          <svg width="14" height="14" viewBox="0 0 14 14">
            <path d="M1 1l12 12M13 1L1 13" stroke="#000" />
          </svg>
        </WindowButtons>
      </TitleBar>
      <TabBar>
        <Tab $file $width={70}>文件</Tab>
        <Tab $width={80}>计算机</Tab>
        <Tab $active $width={64}>查看</Tab>
        <TabTools>
          <RibbonPin />
          <HelpBadge>?</HelpBadge>
        </TabTools>
      </TabBar>
      <Ribbon>
        <Group $width={201}>
          <GroupBody>
            <BigButton $width={79} $top={11}>
              <BigIcon $height={37}><NavPaneIcon /></BigIcon>
              导航窗格
              <Triangle $size={3.5} $left={4} />
            </BigButton>
            <ButtonColumn $gap={19} $pad="18px 0 0 0">
              <SmallButton $gap={3}><PaneIcon />预览窗格</SmallButton>
              <SmallButton $gap={3}><PaneIcon lines />详细信息窗格</SmallButton>
            </ButtonColumn>
          </GroupBody>
          <GroupLabel>窗格</GroupLabel>
        </Group>
        <Group $width={306}>
          <GroupBody>
            <Gallery>
              <GalleryGrid>
                {galleryItems.map((item) => (
                  <GalleryItem key={item.label} $selected={item.selected}>
                    <GalleryIcon>{item.icon}</GalleryIcon>
                    {item.label}
                  </GalleryItem>
                ))}
              </GalleryGrid>
              <GalleryScroll>
                <Triangle $up $color="#b4b8be" $size={3.5} />
                <Triangle $color="#b4b8be" $size={3.5} />
                <MoreMark><Triangle $color="#44546a" /></MoreMark>
              </GalleryScroll>
            </Gallery>
          </GroupBody>
          <GroupLabel $shift={4}>布局</GroupLabel>
        </Group>
        <Group $width={287}>
          <GroupBody>
            <BigButton $width={73} $top={7}>
              <BigIcon $height={41}><SortIcon /></BigIcon>
              排序方式
              <Triangle $size={3.5} $left={2} />
            </BigButton>
            <ButtonColumn $gap={9} $pad="8px 0 0 0">
              <SmallButton>
                <GroupByIcon />分组依据<Triangle $size={3.5} $left={1} />
              </SmallButton>
              <SmallButton $disabled>
                <AddColumnIcon />添加列<Triangle $size={3.5} $left={1} $color="#b4b4b4" />
              </SmallButton>
              <SmallButton $disabled>
                <FitColumnsIcon />将所有列调整为合适的大小
              </SmallButton>
            </ButtonColumn>
          </GroupBody>
          <GroupLabel $shift={4}>当前视图</GroupLabel>
        </Group>
        <Group $width={185}>
          <GroupBody>
            <ButtonColumn $gap={9} $pad="8px 0 0 8px">
              {checks.map((check) => (
                <SmallButton key={check.label} $gap={9}>
                  <CheckBox>{check.on && <CheckMark />}</CheckBox>
                  {check.label}
                </SmallButton>
              ))}
            </ButtonColumn>
            <BigButton $width={78} $top={7} $disabled>
              <BigIcon $height={41}><HideIcon /></BigIcon>
              <div>隐藏</div>
              <div>所选项目</div>
            </BigButton>
          </GroupBody>
          <GroupLabel $shift={4}>显示/隐藏</GroupLabel>
        </Group>
        <Group $width={62}>
          <GroupBody>
            <BigButton $width={58} $top={11}>
              <BigIcon $height={37}><OptionsIcon /></BigIcon>
              选项
            </BigButton>
          </GroupBody>
        </Group>
      </Ribbon>
      <Body>
        <Sidebar>
          {navItems.map((item, index) => (
            <NavRow key={index} $root={item.root} $selected={item.selected}>
              <NavIcon>{item.icon}</NavIcon>
              <NavLabel $track={item.track}>{item.label}</NavLabel>
              {item.pinned && <PinSlot><PinIcon /></PinSlot>}
            </NavRow>
          ))}
        </Sidebar>
        <ScrollBar>
          <ScrollThumb />
          <ScrollArrow>
            <svg width="10" height="8" viewBox="0 0 10 8">
              <path d="M1 1.5l4 4 4-4" fill="none" stroke="#505050" strokeWidth="2" />
            </svg>
          </ScrollArrow>
        </ScrollBar>
        <Main>
          <FolderGrid>
            {folders.map((folder) => (
              <FolderTile key={folder.kind}>
                <FolderIcon kind={folder.kind} />
                <FolderName>{folder.name}</FolderName>
              </FolderTile>
            ))}
          </FolderGrid>
          <SectionHeader>
            <svg width="12" height="8" viewBox="0 0 12 8">
              <path d="M1 1.5l5 5 5-5" fill="none" stroke="#6a6a6a" />
            </svg>
            <SectionTitle>设备和驱动器 (6)</SectionTitle>
            <SectionLine />
          </SectionHeader>
          <DeviceGrid>
            <DeviceTile>
              <DeviceIcon><NetdiskIcon /></DeviceIcon>
              <DeviceInfo $top={10}>
                <DeviceName $height={19}>百度网盘</DeviceName>
                <DeviceDetail>双击运行百度网盘</DeviceDetail>
              </DeviceInfo>
            </DeviceTile>
            {drives.map((drive) => (
              <DeviceTile key={drive.name}>
                <DeviceIcon><DriveIcon system={drive.system} /></DeviceIcon>
                <DeviceInfo>
                  <DeviceName>{drive.name}</DeviceName>
                  <UsageBar>
                    <UsageFill style={{ width: `${drive.usage}%` }} />
                  </UsageBar>
                  <DeviceDetail $track={0.12}>{drive.info}</DeviceDetail>
                </DeviceInfo>
              </DeviceTile>
            ))}
          </DeviceGrid>
        </Main>
      </Body>
      <StatusBar>
        <StatusText>13 个项目</StatusText>
        <StatusDivider />
        <StatusViews>
          <DetailsIcon />
          <PictureIcon />
        </StatusViews>
      </StatusBar>
      <Overlay $x={222} $y={28} width="460" height="54" viewBox="225 30 460 54">
        <path
          d="M671 48C640 49 610 49 583 46C540 43 500 45 460 44C420 43 400 41 375 43C345 46 310 49 285 52C270 54 250 52 236 53M263 36C253 43 244 46 236 53C244 58 251 69 256 74"
          fill="none"
          stroke="#e8201f"
          strokeWidth="5"
          strokeLinecap="round"
          strokeLinejoin="round"
        />
      </Overlay>
      <Overlay $x={966} $y={688} width="260" height="125" viewBox="970 690 260 125">
        <g fill="#fff" stroke="#e2e2e2" strokeWidth="1.6" strokeLinejoin="round">
          <ellipse cx="1071" cy="724" rx="9" ry="11.5" />
          <ellipse cx="1087" cy="708" rx="8.5" ry="11.5" />
          <ellipse cx="1107.5" cy="709.5" rx="9" ry="11" transform="rotate(12 1107 709)" />
          <ellipse cx="1120.5" cy="729" rx="8.5" ry="11" />
          <path d="M1096 726c8 0 12 8 20 17 10 10 10 25-5 25-7 0-10-2-16-2s-9 2-15 2c-14 0-17-12-8-22 10-9 14-20 24-20z" />
          <g fontFamily="'Liberation Sans', sans-serif" fontWeight="700" paintOrder="stroke" strokeWidth="3">
            <text x="983" y="766" fontSize="51" textLength="79" lengthAdjust="spacingAndGlyphs">Bai</text>
            <text x="1075" y="761" fontSize="31" textLength="36" lengthAdjust="spacingAndGlyphs" fontWeight="400">du</text>
          </g>
          <text x="1131" y="764" fontSize="39" fontWeight="700" fontFamily="'Noto Sans CJK SC', sans-serif" textLength="78" paintOrder="stroke" strokeWidth="3">经验</text>
          <text x="986" y="797" fontSize="27" fontFamily="'Open Sans', sans-serif" textLength="228" paintOrder="stroke" strokeWidth="2.5">jingyan.baidu.com</text>
        </g>
      </Overlay>
    </Window>
  );
};

export default App;
